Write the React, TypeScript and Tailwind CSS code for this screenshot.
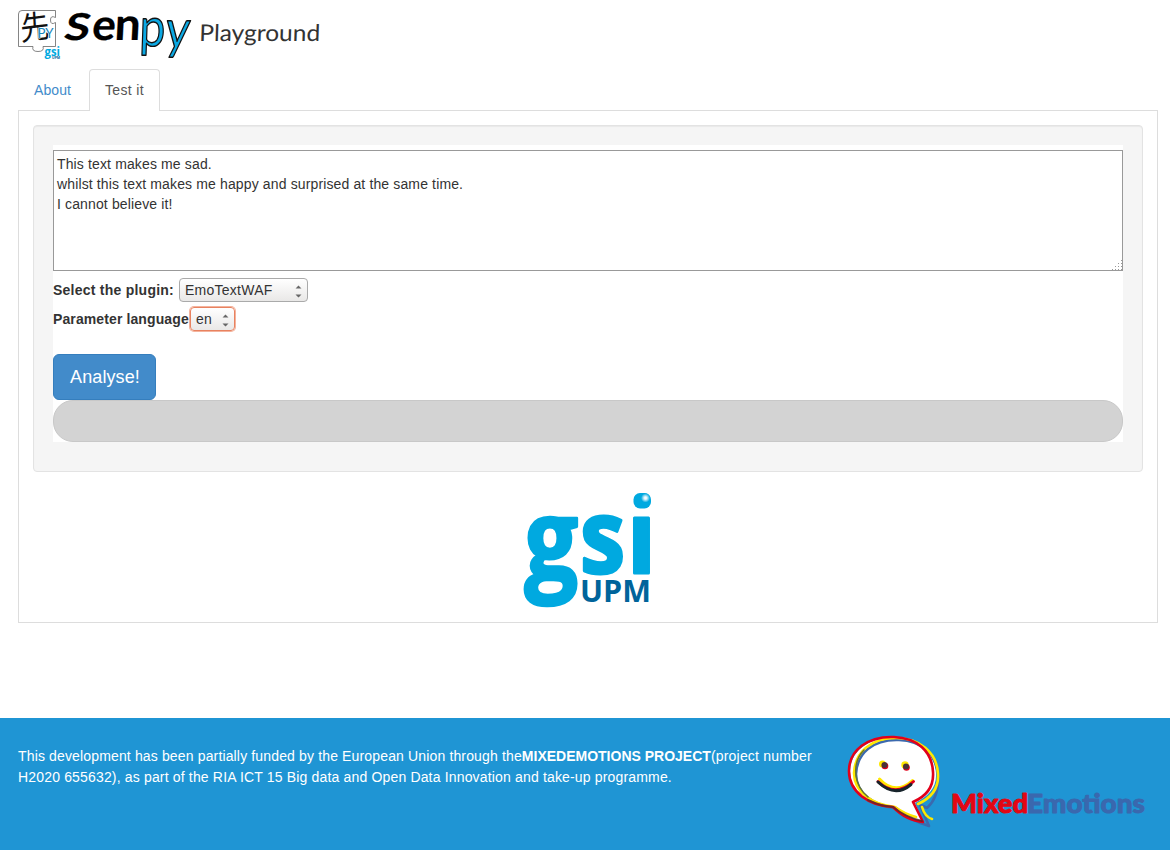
import React from 'react';

function SenpyMark() {
  return (
    <svg width="174" height="56" viewBox="16 6 174 56" className="block shrink-0 overflow-visible" role="img" aria-label="Senpy">
      <path
        d="M18.500 14Q18.500 10.500 22 10.500H55.500V17.500Q50.500 15 50.500 20Q50.500 25.500 55.500 22.500V46.500H43Q44.500 51.500 38 51.500Q31.500 51.500 33 46.500H18.500Z"
        fill="#fff"
        stroke="#666"
        strokeWidth="0.800"
      />
      <text transform="translate(21 40.500) rotate(-7) skewX(-4) scale(0.880 0.980)" fontFamily="Noto Sans CJK JP, sans-serif" fontWeight="400" fontSize="33" fill="#111">先</text>
      <text x="37.500" y="37.500" fontFamily="Lato, sans-serif" fontSize="14" fill="#1686bd" stroke="#fff" strokeWidth="1" paintOrder="stroke" textLength="16" lengthAdjust="spacingAndGlyphs">PY</text>
      <text x="44.500" y="56" fontFamily="Open Sans, sans-serif" fontWeight="700" fontSize="13" fill="#00a9e0" textLength="15.500" lengthAdjust="spacingAndGlyphs">gsi</text>
      <text x="52" y="59" fontFamily="Open Sans, sans-serif" fontWeight="700" fontSize="3.500" fill="#00649b">UPM</text>
      <g fontFamily="Lato, sans-serif" fontWeight="700" strokeLinejoin="round">
        <g fill="#000" stroke="#000" strokeWidth="0.200">
          <text transform="translate(62.500 39.500) skewX(-12) scale(1.250 1)" fontSize="37">S</text>
          <text transform="translate(91 40) skewX(-6) scale(1.050 1.030)" fontSize="42">e</text>
          <text transform="translate(114 40) skewX(-3) scale(1.100 1.080)" fontSize="42">n</text>
        </g>
        <g fontWeight="400" fill="#0ba8e3" stroke="#111" strokeWidth="1.200">
          <text transform="translate(139 45.500) skewX(-2) scale(1.020 1.200)" fontSize="45">p</text>
          <text transform="translate(164 48) skewX(-6) scale(1.040 1.200)" fontSize="45">y</text>
        </g>
      </g>
    </svg>
  );
}

function Playground() {
  return (
    <svg width="130" height="40" viewBox="0 0 130 40" className="mt-[6px] ml-[8px] block overflow-visible">
      <text x="2" y="29" fontFamily="Lato, sans-serif" fontSize="23" fill="#333" textLength="121" lengthAdjust="spacingAndGlyphs" transform="skewX(-2)">Playground</text>
    </svg>
  );
}

function GsiLogo() {
  return (
    <svg width="132" height="120" viewBox="522 490 132 120" className="block overflow-visible" role="img" aria-label="GSI UPM">
      <defs>
        <radialGradient id="shine">
          <stop offset="0" stopColor="#fff" />
          <stop offset="0.3" stopColor="#e3f5fc" />
          <stop offset="1" stopColor="#00a9e0" />
        </radialGradient>
      </defs>
      <g fontFamily="Open Sans, sans-serif" fontWeight="700" fill="#00a9e0" stroke="#00a9e0" strokeLinejoin="round">
        <text transform="translate(524.500 578.500) scale(0.930 1.090)" fontSize="102" strokeWidth="2.500">g</text>
        <text transform="translate(580 573) scale(0.890 1)" fontSize="102" strokeWidth="3">s</text>
        <text transform="translate(627 572.500) scale(0.950 1)" fontSize="100" strokeWidth="3">ı</text>
      </g>
      <rect x="633.500" y="493" width="17.500" height="15.500" rx="6.500" fill="#00a9e0" />
      <circle cx="645.500" cy="498" r="4.500" fill="url(#shine)" />
      <text x="580" y="602" fontFamily="Open Sans, sans-serif" fontWeight="700" fontSize="30" fill="#00649b" textLength="71" lengthAdjust="spacingAndGlyphs">UPM</text>
    </svg>
  );
}

function MixedEmotionsLogo() {
  return (
    <svg width="304" height="100" viewBox="846 733 304 100" className="block overflow-visible" role="img" aria-label="MixedEmotions">
      <g fill="none" strokeWidth="2.600" strokeLinejoin="round" strokeLinecap="round">
        <path d="M894 738C869 737 850 751 850 772C850 793 870 806 893 807C903 815 912 820 923 822L915 803C928 796 937 788 936 773C934 752 918 739 894 738Z" fill="#fff" stroke="none" />
        <path d="M921 805L927 808C936 800 939 789 938 774C936 754 922 741 899 740C873 739 857 753 856 774C856 793 873 806 896 808C906 817 916 822 929 826L920 805" stroke="#3b69ae" />
        <path d="M922 807Q925 817 932 819M918 804C931 798 939 789 938 774C937 752 919 738 896 738C871 738 855 752 854 773C854 792 872 805 895 807C902 812 908 815 916 817" stroke="#ffe800" />
        <path d="M894 737C868 736 849 750 849 771C849 792 869 806 893 807C903 817 911 820 923 822L913 802C927 796 934 786 933 772C932 751 917 738 894 737Z" stroke="#e2001a" />
        <path d="M868 800Q880 806 893 807Q905 817 922 821" stroke="#5a2b2a" strokeWidth="2" opacity="0.8" />
        <path d="M864 750Q854 760 856 776Q858 789 868 797" stroke="#67752f" strokeWidth="1.500" />
      </g>
      <circle cx="882.500" cy="764" r="3.500" fill="#ffe800" />
      <circle cx="885" cy="766" r="3.300" fill="#e2001a" />
      <circle cx="884.500" cy="765" r="3" fill="#493238" />
      <circle cx="905" cy="765" r="3.700" fill="#ffe800" />
      <circle cx="906.500" cy="767.500" r="3.300" fill="#e2001a" />
      <circle cx="906" cy="766.500" r="3" fill="#493238" />
      <g fill="none" strokeWidth="3" strokeLinecap="round">
        <path d="M879.500 779Q895 796 912.500 780.500" stroke="#ffe800" />
        <path d="M878 781.500Q895 798 913.500 781.500" stroke="#e2001a" />
        <path d="M878 782Q895 798 911 784.500" stroke="#17242b" />
      </g>
      <g fontFamily="Lato, sans-serif" fontWeight="900" fontSize="26" strokeWidth="0.900" strokeLinejoin="round">
        <text x="951" y="812.500" fill="#e30613" stroke="#e30613" textLength="77" lengthAdjust="spacingAndGlyphs">Mixed</text>
        <text x="1027" y="812.500" fill="#3a68ae" stroke="#3a68ae" textLength="118" lengthAdjust="spacingAndGlyphs">Emotions</text>
      </g>
    </svg>
  );
}

function Stepper() {
  return (
    <svg width="7" height="13" viewBox="0 0 7 13" className="mt-[3px] block shrink-0" fill="#666">
      <path d="M0.500 3.500L3.500 0.500L6.500 3.500ZM0.500 9.500L3.500 12.500L6.500 9.500Z" />
    </svg>
  );
}

function SelectBox({ value, className }: { value: string; className: string }) {
  return (
    <button
      type="button"
      className={`flex h-6 items-center justify-between rounded-[4px] border bg-linear-to-b from-white to-[#e9e8e7] pr-[5px] pl-[5px] text-left text-[14px] leading-[20px] tracking-[0.25px] ${className}`}
    >
      <span>{value}</span>
      <Stepper />
    </button>
  );
}

const sample = `This text makes me sad.
whilst this text makes me happy and surprised at the same time.
I cannot believe it!`;

export default function App() {
  return (
    <div className="flex h-[850px] w-[1170px] flex-col overflow-hidden bg-white font-['Liberation_Sans',Arial,sans-serif] text-[14px] leading-[20px] text-[#333]">
      <header className="flex h-[69px] shrink-0 items-start pt-[6px] pl-4">
        <SenpyMark />
        <Playground />
      </header>
      <main className="flex shrink-0 flex-col pr-3 pl-[18px]">
        <nav className="z-10 -mb-px flex h-[42px]">
          <a href="#about" className="w-[71px] pt-[11px] pl-4 tracking-[0.1px] text-[#428bca]">About</a>
          <a href="#test" className="w-[71px] rounded-t-[4px] border border-b-0 border-[#ddd] bg-white pt-[10px] pl-[15px] tracking-[0.35px] text-[#555]">Test it</a>
        </nav>
        <section className="flex h-[513px] flex-col border border-[#ddd] px-[14px] pt-[14px]">
          <div className="h-[347px] shrink-0 rounded-[4px] border border-[#e3e3e3] bg-[#f5f5f5] px-[19px] pt-[19px] shadow-[inset_0_1px_1px_rgba(0,0,0,0.05)]">
            <div className="flex h-[297px] flex-col bg-white pt-[5px]">
              <textarea
                defaultValue={sample}
                spellCheck={false}
                className="block h-[121px] w-full shrink-0 resize-none border border-[#999] bg-white px-[3px] py-[3px] leading-[20px] tracking-[0.135px] outline-none"
              />
              <div className="relative h-0">
                <svg width="10" height="10" viewBox="0 0 10 10" className="absolute right-[1px] bottom-[1px]" stroke="#999" strokeDasharray="1 2">
                  <path d="M0 9.500H10M3 6.500H10M6 3.500H10M9 0.500H10" />
                </svg>
              </div>
              <div className="mt-[7px] flex h-6 items-center">
                <label className="w-[126px] font-bold tracking-[0.24px] whitespace-nowrap">Select the plugin:</label>
                <SelectBox value="EmoTextWAF" className="w-[129px] border-[#aaa]" />
              </div>
              <div className="mt-[5px] flex h-6 items-center">
                <label className="w-[137px] font-bold tracking-[0.11px] whitespace-nowrap">Parameter language</label>
                <SelectBox value="en" className="w-[45px] border-[#e88260] shadow-[0_0_0_1px_#f4b39c]" />
              </div>
              <button type="button" className="mt-[23px] h-[46px] w-[103px] shrink-0 rounded-[6px] border border-[#357ebd] bg-[#428bca] pl-px text-[18px] leading-[24px] tracking-[0.1px] text-white">Analyse!</button>
              <div className="h-[42px] shrink-0 rounded-[20px] border border-[#c8c8c8] bg-[#d3d3d3]" />
            </div>
          </div>
          <div className="flex justify-center pt-[18px]">
            <GsiLogo />
          </div>
        </section>
      </main>
      <footer className="mt-[95px] flex h-[132px] shrink-0 bg-[#1f95d4] pt-[15px] pl-[18px] text-white">
        <p className="w-[828px] shrink-0 pt-[13px] leading-[21px] whitespace-nowrap">
          <span className="tracking-[0.147px]">This development has been partially funded by the European Union through the</span>
          <b>MIXEDEMOTIONS PROJECT</b>
          <span className="tracking-[0.2px]">(project number</span>
          <br />
          <span className="tracking-[0.165px]">H2020 655632), as part of the RIA ICT 15 Big data and Open Data Innovation and take-up programme.</span>
        </p>
        <MixedEmotionsLogo />
      </footer>
    </div>
  );
}
